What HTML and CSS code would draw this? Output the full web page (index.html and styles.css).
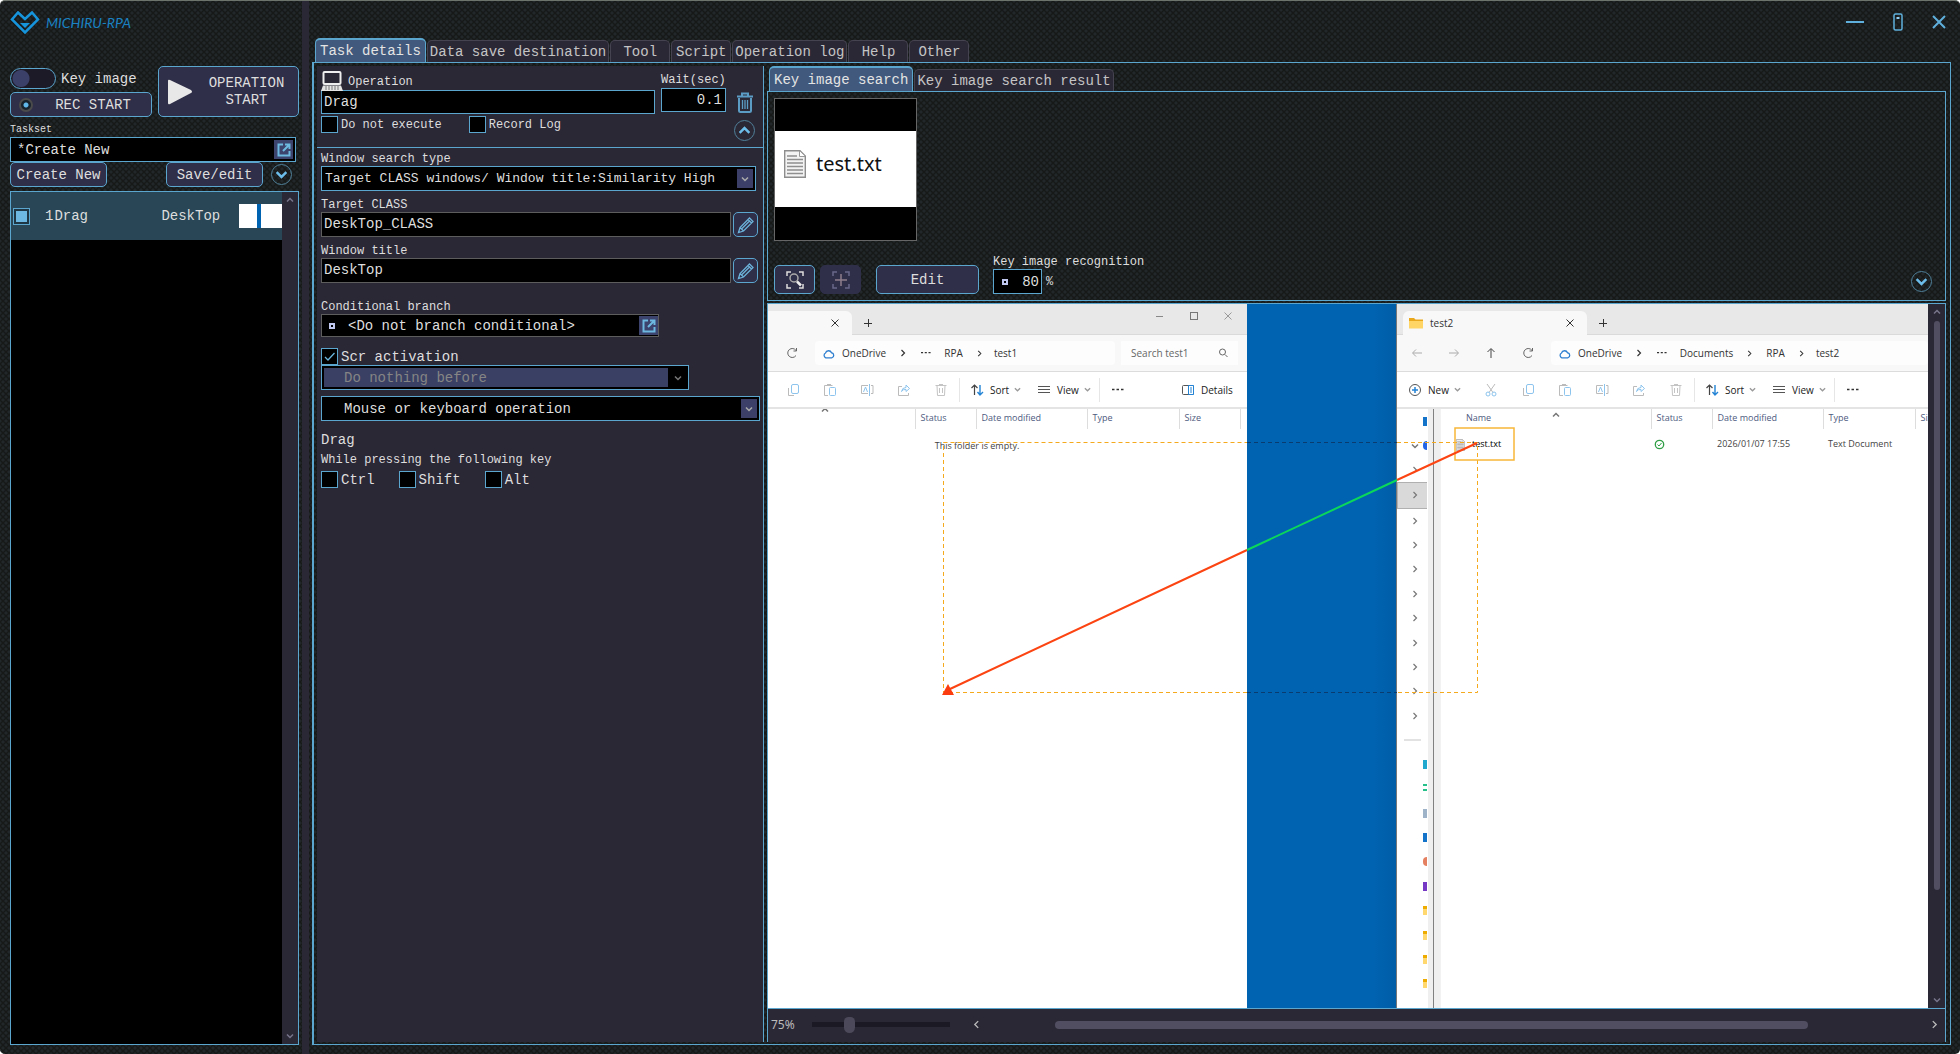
FILE: index.html
```html
<!DOCTYPE html>
<html lang="en">
<head>
<meta charset="utf-8">
<title>MICHIRU-RPA</title>
<link rel="stylesheet" href="styles.css">
</head>
<body>
<svg class="defs" aria-hidden="true">
  <symbol id="down" viewBox="0 0 8 8"><path d="M1 2.5 4 5.5 7 2.5" fill="none" stroke="currentColor" stroke-width="1.5"/></symbol>
  <symbol id="right" viewBox="0 0 8 8"><path d="M2.5 1 5.5 4 2.5 7" fill="none" stroke="currentColor" stroke-width="1.2"/></symbol>
  <symbol id="open" viewBox="0 0 14 14"><path d="M6 1.5H1.5v11h11V8M8 1.5h4.500V6M12.500 1.500 6 8" fill="none" stroke="currentColor" stroke-width="2"/></symbol>
  <symbol id="pencil" viewBox="0 0 18 18"><path d="M1.500 16.500 3 11.500 12.500 2 16 5.500 6.500 15ZM3 11.500 6.500 15M11 3.500 14.500 7M5 12.500 12.500 5" fill="none" stroke="currentColor" stroke-width="1.3"/></symbol>
  <symbol id="cross" viewBox="0 0 10 10"><path d="M1.500 1.500 8.500 8.500M8.500 1.500 1.500 8.500" fill="none" stroke="currentColor"/></symbol>
  <symbol id="plus" viewBox="0 0 10 10"><path d="M1 5.500H9M5.500 1V9" fill="none" stroke="currentColor"/></symbol>
  <symbol id="refresh" viewBox="0 0 12 12"><path d="M10 8.500A4.500 4.500 0 1 1 10 3.500M10.500 1V4H7.500" fill="none" stroke="#666"/></symbol>
  <symbol id="cloud" viewBox="0 0 12 12"><path d="M3.500 10A2.500 2.500 0 0 1 3.200 5.500 3 3 0 0 1 8.800 5.300 2.400 2.400 0 0 1 9 10Z" fill="none" stroke="#2f7fd0" stroke-width="1.200"/></symbol>
  <symbol id="dots" viewBox="0 0 12 4"><path d="M0 1.500h2.500M4.500 1.500h2.500M9 1.500h2.500" stroke="currentColor" stroke-width="1.500"/></symbol>
  <symbol id="cut" viewBox="0 0 14 14"><path d="M3 1 9 9.500M11 1 5 9.500" fill="none" stroke="#bbb"/><circle cx="4" cy="11" r="2" fill="none" stroke="#8cc4ee"/><circle cx="10" cy="11" r="2" fill="none" stroke="#8cc4ee"/></symbol>
  <symbol id="copy" viewBox="0 0 14 14"><path d="M2.500 5v7.500H8" fill="none" stroke="#bbb"/><rect x="5.500" y="1.500" width="7" height="9" rx="1.500" fill="none" stroke="#8cc4ee"/></symbol>
  <symbol id="paste" viewBox="0 0 14 14"><path d="M1.500 2.500h8M1.500 2.500v10H5M4 1.500h4" fill="none" stroke="#bbb"/><rect x="6.500" y="4.500" width="6" height="8" rx="1" fill="none" stroke="#8cc4ee"/></symbol>
  <symbol id="rename" viewBox="0 0 14 14"><path d="M8 2.500H1.500v8H8M11 2.500h2v8h-2" fill="none" stroke="#bbb"/><path d="M3.500 9 5.500 4 7.500 9M9.500 1v12" fill="none" stroke="#8cc4ee"/></symbol>
  <symbol id="share" viewBox="0 0 14 14"><path d="M5 3.500H1.500v9h10V10" fill="none" stroke="#bbb"/><path d="M4.500 8.500Q5 4.500 9 4.500V2L12.500 5.500 9 8.500V6.500Q6 6 4.500 8.500Z" fill="none" stroke="#8cc4ee"/></symbol>
  <symbol id="bin" viewBox="0 0 14 14"><path d="M1.500 2.500h11M3 2.500 3.500 12.500h7L11 2.500M5.500 5v5M8.500 5v5M5 1.500h4" fill="none" stroke="#c4c4c4"/></symbol>
  <symbol id="sort" viewBox="0 0 14 14"><path d="M4.500 12V2M1.500 5 4.500 2 7.500 5" fill="none" stroke="#444" stroke-width="1.200"/><path d="M10 2V12M7.500 9 10 12 13 9" fill="none" stroke="#2383d5" stroke-width="1.400"/></symbol>
  <symbol id="lines" viewBox="0 0 14 14"><path d="M1 3.500h12M1 6.500h12M1 9.500h12" stroke="#555"/></symbol>
  <symbol id="doc" viewBox="0 0 22 28"><path d="M.7.700H16L21.300 6V27.300H.7Z" fill="#f3f3f3" stroke="#8d8d8d" stroke-width="1.400"/><path d="M15.500 1V6.500H21" fill="#fff" stroke="#999"/><path d="M3 6h10M3 9.500h16M3 13h16M3 16.500h16M3 20h16M3 23.500h16" stroke="#8f8f8f" stroke-width="1.500"/></symbol>
</svg>
<div class="app">
  <aside class="side">
    <div class="brand">
      <svg width="30" height="24" viewBox="0 0 30 24"><path d="M8 1.500 15 8 22 1.500 28 8.500 15 21.500 2 8.500Z" fill="none" stroke="#1795dc" stroke-width="2.500"/><path d="M10 12h10l-5 5z" fill="#1795dc"/></svg>
      <span>MICHIRU-RPA</span>
    </div>
    <div class="runbar">
      <div class="rec">
        <label class="toggle"><input type="checkbox"><span>Key image</span></label>
        <button class="btn recbtn"><i class="led"></i><span>REC START</span></button>
      </div>
      <button class="btn start"><svg width="26" height="26" viewBox="0 0 26 26"><path d="M1 2Q1 0 3 1L24 11Q26 13 24 14L3 25Q1 26 1 24Z" fill="#e8e8e8"/></svg><span>OPERATION<br>START</span></button>
    </div>
    <label class="tiny" for="taskset">Taskset</label>
    <div class="field taskset"><input id="taskset" value="*Create New"><button class="sq" aria-label="Open taskset"><svg width="14" height="14"><use href="#open"/></svg></button></div>
    <div class="taskbtns"><button class="btn">Create New</button><button class="btn save">Save/edit</button><button class="round" aria-label="Expand"><svg width="13" height="13"><use href="#down"/></svg></button></div>
    <div class="list">
      <div class="tasks">
        <div class="task">
          <input type="checkbox" class="mark" checked aria-label="Run task 1">
          <span class="num">1</span><span class="name">Drag</span><span>DeskTop</span>
          <i class="thumb"></i>
        </div>
      </div>
      <div class="scroll"><svg class="up" width="8" height="8"><use href="#down"/></svg><svg width="8" height="8"><use href="#down"/></svg></div>
    </div>
  </aside>
  <div class="divider"></div>
  <main class="main">
    <header class="winbtns">
      <button aria-label="Minimize"><svg width="20" height="20" viewBox="0 0 20 20"><path d="M1 10h18" stroke="#5fb0dc" stroke-width="2"/></svg></button>
      <button aria-label="Restore"><svg width="10" height="20" viewBox="0 0 10 20"><rect x="1" y="2" width="8" height="16" rx="1.500" fill="none" stroke="#5fb0dc" stroke-width="1.500"/><path d="M3.500 6h3" stroke="#8fd0f4" stroke-width="2"/></svg></button>
      <button aria-label="Close"><svg width="16" height="16" viewBox="0 0 16 16"><path d="M2 2 14 14M14 2 2 14" stroke="#5fb0dc" stroke-width="2"/></svg></button>
    </header>
    <nav class="tabs">
      <button class="tab on">Task details</button><button class="tab">Data save destination</button><button class="tab">Tool</button><button class="tab">Script</button><button class="tab">Operation log</button><button class="tab">Help</button><button class="tab">Other</button>
    </nav>
    <div class="frame">
      <section class="details">
        <div class="head">
          <div class="op">
            <div class="oplabel"><svg width="22" height="21" viewBox="0 0 22 21"><rect x="2.500" y="1" width="17" height="12" rx="1" fill="none" stroke="#eee" stroke-width="2"/><path d="M2 14.500h18l2 5.500H0z" fill="#e4e4e4"/><path d="M4 16h14M4 18h14" stroke="#777" stroke-dasharray="2 1"/></svg><label class="small" for="op">Operation</label></div>
            <div class="field"><input id="op" value="Drag"></div>
            <div class="checks small"><label><input type="checkbox" class="box">Do not execute</label><label class="log"><input type="checkbox" class="box">Record Log</label></div>
          </div>
          <div class="wait"><label class="small" for="wait">Wait(sec)</label><div class="field"><input id="wait" value="0.1"></div></div>
          <div class="tools">
            <button class="bare" aria-label="Delete"><svg width="18" height="21" viewBox="0 0 18 21"><path d="M1 4.500h16M6 4V1.500h6V4M3 6V18.500Q3 20 4.500 20h9Q15 20 15 18.500V6" fill="none" stroke="#5a9cc4" stroke-width="2"/><path d="M6.500 8v9M9 8v9M11.500 8v9" stroke="#5a9cc4" stroke-width="1.300"/></svg></button>
            <button class="round up" aria-label="Collapse"><svg width="13" height="13"><use href="#down"/></svg></button>
          </div>
        </div>
        <div class="form">
          <div class="group"><label class="small" for="wst">Window search type</label>
            <div class="field drop wst"><select id="wst"><option>Target CLASS windows/ Window title:Similarity High</option></select><i class="arrow"><svg width="8" height="8"><use href="#down"/></svg></i></div></div>
          <div class="group"><label class="small" for="cls">Target CLASS</label>
            <div class="pair"><div class="field dim"><input id="cls" value="DeskTop_CLASS"></div><button class="btn pen" aria-label="Edit class"><svg width="18" height="18"><use href="#pencil"/></svg></button></div></div>
          <div class="group"><label class="small" for="ttl">Window title</label>
            <div class="pair"><div class="field dim"><input id="ttl" value="DeskTop"></div><button class="btn pen" aria-label="Edit title"><svg width="18" height="18"><use href="#pencil"/></svg></button></div></div>
          <div class="group branch"><label class="small" for="cond">Conditional branch</label>
            <div class="field dim cond"><i class="dot"></i><input id="cond" value="&lt;Do not branch conditional&gt;"><button class="sq" aria-label="Open branch"><svg width="14" height="14"><use href="#open"/></svg></button></div></div>
          <div class="group scr"><label class="check"><input type="checkbox" class="box" checked>Scr activation</label>
            <div class="field drop before"><select disabled aria-label="Before activation"><option>Do nothing before</option></select><i class="arrow"><svg width="8" height="8"><use href="#down"/></svg></i></div></div>
          <div class="field drop mouse"><select aria-label="Operation type"><option>Mouse or keyboard operation</option></select><i class="arrow"><svg width="8" height="8"><use href="#down"/></svg></i></div>
          <div class="keys"><p>Drag</p><p class="small">While pressing the following key</p>
            <div class="checks"><label><input type="checkbox" class="box">Ctrl</label><label><input type="checkbox" class="box">Shift</label><label><input type="checkbox" class="box">Alt</label></div></div>
        </div>
      </section>
      <section class="work">
        <nav class="tabs"><button class="tab on">Key image search</button><button class="tab">Key image search result</button></nav>
        <div class="search">
          <div class="preview"><div><svg width="22" height="28"><use href="#doc"/></svg><span>test.txt</span></div></div>
          <div class="actions">
            <button class="btn ico" aria-label="Find"><svg width="18" height="18" viewBox="0 0 18 18"><path d="M1 5V1h4M13 1h4v4M17 13v4h-4M5 17H1v-4" fill="none" stroke="#ddd" stroke-width="1.500"/><circle cx="8" cy="7" r="4" fill="none" stroke="#aaa" stroke-width="1.500"/><path d="M11 10.500 15 14.500" stroke="#eee" stroke-width="2.500"/></svg></button>
            <button class="btn ico off" disabled aria-label="Add"><svg width="18" height="18" viewBox="0 0 18 18"><path d="M1 5V1h4M13 1h4v4M17 13v4h-4M5 17H1v-4" fill="none" stroke="#68688a" stroke-width="1.500"/><path d="M3 9h12M9 3v12" stroke="#8d7f8c" stroke-width="1.500"/></svg></button>
            <button class="btn edit">Edit</button>
            <div class="recog"><label class="small" for="rec">Key image recognition</label><div class="pct"><div class="field"><i class="dot"></i><input id="rec" value="80"></div><span class="small">%</span></div></div>
            <button class="round" aria-label="Expand"><svg width="13" height="13"><use href="#down"/></svg></button>
          </div>
        </div>
        <div class="viewer">
          <div class="stage">
            <div class="canvas">
              <div class="win one">
                <div class="wtop"><div class="wtab"><svg width="10" height="10"><use href="#cross"/></svg></div><svg class="add" width="10" height="10"><use href="#plus"/></svg>
                  <div class="wctl"><svg width="10" height="10" viewBox="0 0 10 10"><path d="M1 5.500h7" stroke="#888"/></svg><svg width="10" height="10" viewBox="0 0 10 10"><rect x="1.500" y="1.500" width="7" height="7" fill="none" stroke="#777"/></svg><svg width="10" height="10"><use href="#cross"/></svg></div></div>
                <div class="wnav"><span class="cell wide"><svg width="12" height="12"><use href="#refresh"/></svg></span>
                  <div class="addr"><svg width="13" height="13"><use href="#cloud"/></svg><span class="first">OneDrive</span><svg width="8" height="8"><use href="#right"/></svg><svg width="10" height="4"><use href="#dots"/></svg><span>RPA</span><svg width="7" height="7"><use href="#right"/></svg><span>test1</span></div>
                  <div class="find"><span>Search test1</span><svg width="10" height="10" viewBox="0 0 10 10"><circle cx="4.500" cy="4" r="3" fill="none" stroke="#666"/><path d="M7 6.500 9.500 9" stroke="#666"/></svg></div></div>
                <div class="wcmd"><span class="cell"><svg width="14" height="14"><use href="#copy"/></svg></span><span class="cell"><svg width="14" height="14"><use href="#paste"/></svg></span><span class="cell"><svg width="14" height="14"><use href="#rename"/></svg></span><span class="cell"><svg width="14" height="14"><use href="#share"/></svg></span><span class="cell"><svg width="14" height="14"><use href="#bin"/></svg></span>
                  <span class="cmd sep"><svg width="14" height="14"><use href="#sort"/></svg>Sort<svg width="7" height="7"><use href="#down"/></svg></span><span class="cmd view"><svg width="14" height="14"><use href="#lines"/></svg>View<svg width="7" height="7"><use href="#down"/></svg></span><span class="cell sep"><svg width="12" height="4"><use href="#dots"/></svg></span>
                  <span class="cmd info"><svg width="14" height="14" viewBox="0 0 14 14"><rect x="1.500" y="2.500" width="11" height="9" rx="1" fill="none" stroke="#555"/><path d="M7.500 2.500h5v9h-5zM9 5h2M9 7h2M9 9h2" fill="none" stroke="#2383d5"/></svg>Details</span></div>
                <table class="files"><colgroup><col class="c0"><col class="c1"><col class="c2"><col class="c3"><col class="c1"><col></colgroup>
                  <thead><tr><th><svg class="asc" width="8" height="8"><use href="#down"/></svg></th><th>Status</th><th>Date modified</th><th>Type</th><th>Size</th><th></th></tr></thead>
                  <tbody><tr><td colspan="6" class="empty">This folder is empty.</td></tr></tbody></table>
              </div>
              <div class="desk"></div>
              <div class="win two">
                <div class="wtop"><div class="wtab"><svg width="14" height="12" viewBox="0 0 14 12"><path d="M0 1h5l1.500 1.500H14V11H0z" fill="#eaa81c"/><path d="M0 4h14v7.500H0z" fill="#ffd566"/></svg><span>test2</span><svg width="10" height="10"><use href="#cross"/></svg></div><svg class="add" width="10" height="10"><use href="#plus"/></svg></div>
                <div class="wnav"><span class="cell"><svg width="12" height="12" viewBox="0 0 12 12"><path d="M11 6H2M5 2.500 1.500 6 5 9.500" fill="none" stroke="#aaa"/></svg></span><span class="cell"><svg width="12" height="12" viewBox="0 0 12 12"><path d="M1 6h9M7 2.500 10.500 6 7 9.500" fill="none" stroke="#aaa"/></svg></span><span class="cell"><svg width="12" height="12" viewBox="0 0 12 12"><path d="M6 11V2M2.500 5 6 1.500 9.500 5" fill="none" stroke="#444"/></svg></span><span class="cell"><svg width="12" height="12"><use href="#refresh"/></svg></span>
                  <div class="addr"><svg width="13" height="13"><use href="#cloud"/></svg><span class="first">OneDrive</span><svg width="8" height="8"><use href="#right"/></svg><svg width="10" height="4"><use href="#dots"/></svg><span>Documents</span><svg width="7" height="7"><use href="#right"/></svg><span>RPA</span><svg width="7" height="7"><use href="#right"/></svg><span>test2</span></div></div>
                <div class="wcmd"><span class="cmd new"><svg width="14" height="14" viewBox="0 0 14 14"><circle cx="7" cy="7" r="5.500" fill="none" stroke="#555"/><path d="M4 7h6M7 4v6" stroke="#2383d5" stroke-width="1.500"/></svg>New<svg width="7" height="7"><use href="#down"/></svg></span><span class="cell"><svg width="14" height="14"><use href="#cut"/></svg></span><span class="cell"><svg width="14" height="14"><use href="#copy"/></svg></span><span class="cell"><svg width="14" height="14"><use href="#paste"/></svg></span><span class="cell"><svg width="14" height="14"><use href="#rename"/></svg></span><span class="cell"><svg width="14" height="14"><use href="#share"/></svg></span><span class="cell"><svg width="14" height="14"><use href="#bin"/></svg></span>
                  <span class="cmd sep"><svg width="14" height="14"><use href="#sort"/></svg>Sort<svg width="7" height="7"><use href="#down"/></svg></span><span class="cmd view"><svg width="14" height="14"><use href="#lines"/></svg>View<svg width="7" height="7"><use href="#down"/></svg></span><span class="cell sep"><svg width="12" height="4"><use href="#dots"/></svg></span></div>
                <div class="wbody">
                  <div class="tree">
                    <div class="nodes">
                      <div class="node"><i class="c-sky"></i></div><div class="node"><svg width="8" height="8"><use href="#down"/></svg><i class="c-blue"></i></div>
                      <div class="node"><svg width="8" height="8"><use href="#right"/></svg></div><div class="node sel"><svg width="8" height="8"><use href="#right"/></svg></div><div class="node"><svg width="8" height="8"><use href="#right"/></svg></div><div class="node"><svg width="8" height="8"><use href="#right"/></svg></div><div class="node"><svg width="8" height="8"><use href="#right"/></svg></div><div class="node"><svg width="8" height="8"><use href="#right"/></svg></div><div class="node"><svg width="8" height="8"><use href="#right"/></svg></div><div class="node"><svg width="8" height="8"><use href="#right"/></svg></div><div class="node"><svg width="8" height="8"><use href="#right"/></svg></div><div class="node"><svg width="8" height="8"><use href="#right"/></svg></div><div class="node"><svg width="8" height="8"><use href="#right"/></svg></div>
                      <div class="node"><hr></div>
                      <div class="node"><i class="c-teal"></i></div><div class="node"><i class="c-green"></i></div><div class="node"><i class="c-grey"></i></div><div class="node"><i class="c-sky"></i></div><div class="node"><i class="c-coral"></i></div><div class="node"><i class="c-violet"></i></div><div class="node"><i class="c-gold"></i></div><div class="node"><i class="c-gold"></i></div><div class="node"><i class="c-gold"></i></div><div class="node"><i class="c-gold"></i></div>
                    </div>
                    <div class="bar"></div>
                  </div>
                  <table class="files"><colgroup><col class="n0"><col class="c1"><col class="c2"><col class="c3"><col></colgroup>
                    <thead><tr><th class="nm">Name<svg class="asc" width="8" height="8"><use href="#down"/></svg></th><th>Status</th><th>Date modified</th><th>Type</th><th>Size</th></tr></thead>
                    <tbody><tr><td class="nm file"><svg width="9" height="12"><use href="#doc"/></svg>test.txt</td><td class="ok"><svg width="11" height="11" viewBox="0 0 11 11"><circle cx="5.500" cy="5.500" r="4.200" fill="none" stroke="#2f9e44" stroke-width="1.300"/><path d="M3.500 5.500 5 7 7.500 4" fill="none" stroke="#2f9e44"/></svg></td><td>2026/01/07 17:55</td><td>Text Document</td><td></td></tr></tbody></table>
                </div>
              </div>
              <svg class="overlay" width="1161" height="703">
                <g fill="none" stroke="#f5a91d" stroke-dasharray="4 3"><path d="M175.500 138.500H479M629 138.500H709.500V388.500H629M479 388.500H175.500V138.500"/><path d="M479 138.500H629M479 388.500H629" stroke="#0b3c70"/></g>
                <rect x="687" y="124" width="59" height="32" fill="none" stroke="#f8b838" stroke-width="1.500"/>
                <path d="M709 139 629 176M479 246 182 385" stroke="#fb4412" stroke-width="2"/><path d="M629 176 479 246" stroke="#0bd85a" stroke-width="2"/>
                <path d="M174 391 180 380 186 391Z" fill="#fb3c10"/>
              </svg>
            </div>
            <div class="scroll vs"><svg class="up" width="8" height="8"><use href="#down"/></svg><i></i><svg width="8" height="8"><use href="#down"/></svg></div>
          </div>
          <div class="foot"><label for="zoom">75%</label><input id="zoom" type="range" min="0" max="100" value="25"><svg class="left" width="9" height="9"><use href="#right"/></svg><div class="hs"><i></i></div><svg width="9" height="9"><use href="#right"/></svg></div>
        </div>
      </section>
    </div>
  </main>
</div>
</body>
</html>
```
FILE: styles.css
```css
:root {
  --blue: #5aa6cf;
  --panel: #2b2836;
  --btn: #302f49;
  --text: #dedede;
  --dots: radial-gradient(circle at 50% 50%, #22282a 0, #22282a 1px, transparent 2px);
}
* { box-sizing: border-box; }
body {
  margin: 0;
  color: var(--text);
  font: 14px/16px "Liberation Mono", monospace;
  background: #fff;
}
button, input, select { font: inherit; color: inherit; margin: 0; padding: 0; border: 0; background: none; min-width: 0; }
button { display: flex; align-items: center; justify-content: center; white-space: nowrap; }
svg { display: block; flex: none; }
p { margin: 0; }
i { display: block; flex: none; }
.defs { position: absolute; width: 0; height: 0; }
.app {
  display: grid;
  grid-template-columns: 302px 7px 1fr;
  height: 100vh;
  border-top: 1px solid #6c746c;
  border-radius: 5px;
  background: var(--dots) 0 0 / 6px 6px, var(--dots) 3px 3px / 6px 6px, #171919;
  overflow: hidden;
}
.divider { background: var(--panel); }
.small { font-size: 12px; }
.tiny { font-size: 10px; line-height: 12px; }

/* shared controls */
.btn { background: var(--btn); border: 1px solid var(--blue); border-radius: 5px; }
.round { width: 21px; height: 21px; border: 1px solid #4f8099; border-radius: 50%; color: #6dbdea; }
.round.up svg, svg.up { transform: rotate(180deg); }
.field { display: flex; align-items: center; background: #000; border: 1px solid var(--blue); height: 25px; }
.field.dim { border-color: #5d5d5d; }
.field input { flex: 1; width: 100%; padding-left: 2px; }
.sq { width: 19px; height: 19px; background: #3c436c; color: #6cb8e0; flex: none; }
.dot { width: 6px; height: 6px; border: 2px solid #c0c8f0; }
.drop select { flex: 1; appearance: none; height: 100%; padding-left: 3px; opacity: 1; }
.arrow { display: flex; align-items: center; justify-content: center; align-self: stretch; width: 16px; margin: 2px; background: #3c4068; color: #aaa; }
.box { appearance: none; width: 17px; height: 17px; border: 1px solid var(--blue); background: #000; margin-right: 3px; flex: none; }
.box:checked { background: #000 url("data:image/svg+xml,%3Csvg xmlns='http://www.w3.org/2000/svg' viewBox='0 0 15 15'%3E%3Cpath d='M3 8 6 11 12.500 4' fill='none' stroke='%236ab5dc' stroke-width='1.300'/%3E%3C/svg%3E"); }
.scroll { display: flex; flex-direction: column; justify-content: space-between; align-items: center; width: 16px; padding: 4px 0; background: var(--panel); color: #77758a; }

/* left side */
.side { display: flex; flex-direction: column; padding: 10px 3px 9px 10px; min-height: 0; }
.brand { display: flex; align-items: center; gap: 6px; height: 24px; color: #1a82c2; font: italic 14px/16px Lato, sans-serif; }
.runbar { display: flex; gap: 6px; margin-top: 31px; height: 51px; }
.rec { display: flex; flex-direction: column; justify-content: space-between; width: 142px; }
.toggle { display: flex; align-items: center; gap: 5px; margin-top: 2px; white-space: nowrap; }
.toggle input { appearance: none; width: 46px; height: 21px; border: 1px solid var(--blue); border-radius: 11px; background: radial-gradient(circle at 10px 50%, #3b4068 8px, #1c1a26 9px); }
.recbtn { height: 25px; gap: 22px; padding-right: 12px; }
.led { width: 14px; height: 14px; border-radius: 50%; border: 2px solid #4b4b4b; background: radial-gradient(#5fb7ea 2px, #16222c 3px); }
.start { width: 141px; gap: 16px; line-height: 17px; padding-right: 6px; }
.side .tiny { margin: 7px 0 1px; line-height: 12px; }
.taskset { width: 286px; padding-right: 2px; }
.taskset input { padding-left: 6px; }
.taskbtns { display: flex; align-items: center; gap: 8px; }
.taskbtns .btn { width: 97px; height: 25px; }
.taskbtns .save { margin-left: 51px; }
.list { display: flex; flex: 1; margin-top: 4px; border: 1px solid var(--blue); background: #000; min-height: 0; }
.tasks { flex: 1; }
.task { display: flex; align-items: center; height: 48px; padding-left: 2px; background: #284656; }
.mark { appearance: none; width: 17px; height: 17px; border: 1px solid var(--blue); background: #6cb8e2; box-shadow: inset 0 0 0 2px #1f3744; }
.num { margin: 0 1px 0 15px; }
.name { width: 107px; }
.thumb { width: 43px; height: 24px; margin-left: auto; background: linear-gradient(90deg, #fff 18px, #0063b1 18px 22px, #fff 22px); }

/* main area */
.main { display: flex; flex-direction: column; padding: 0 9px 9px 3px; min-width: 0; min-height: 0; }
.winbtns { display: flex; justify-content: flex-end; align-items: center; gap: 28px; height: 37px; padding: 4px 4px 0 0; }
.tabs { display: flex; align-items: flex-end; gap: 1px; height: 24px; padding-left: 3px; flex: none; }
.tab { min-width: 60px; height: 22px; padding: 0 2px; background: var(--panel); border: 1px solid #45434f; border-bottom: 0; border-radius: 5px 5px 0 0; color: #c4c4c4; }
.tab.on { height: 24px; padding: 0 4px; background: #41597c; border: 1px solid var(--blue); border-width: 2px 1px 0; color: #e4e4e4; }
.frame { display: flex; flex: 1; border: 1px solid var(--blue); border-left-width: 2px; padding: 3px 4px 2px 3px; min-height: 0; }
.details { width: 447px; flex: none; background: var(--panel); border-right: 1px solid var(--blue); }
.head { display: flex; height: 82px; padding: 3px 8px 0 4px; border-bottom: 1px solid var(--blue); }
.op { width: 334px; }
.oplabel { display: flex; align-items: center; gap: 5px; height: 21px; padding-top: 4px; }
.op .field, .wait .field { height: 24px; }
.checks { display: flex; margin-top: 2px; }
.checks label, .check { display: flex; align-items: center; }
.log { margin-left: 27px; }
.wait { display: flex; flex-direction: column; width: 65px; margin-left: 6px; padding-top: 3px; }
.wait input { text-align: right; padding-right: 3px; }
.tools { display: flex; flex-direction: column; align-items: center; gap: 7px; margin-left: auto; padding: 23px 0 0; }
.form { padding: 2px 0 0 4px; }
.group { margin-bottom: 5px; }
.group > .small { display: block; height: 16px; line-height: 18px; }
.wst { width: 435px; }
.wst select { font-size: 13px; }
.pair { display: flex; gap: 2px; }
.pair .field { width: 410px; }
.pair input { padding: 0 0 2px 2px; }
.pen { width: 25px; height: 25px; color: #6cb2da; }
.branch { margin: 15px 0 11px; }
.cond { width: 338px; height: 23px; padding-left: 7px; }
.cond input { padding-left: 13px; }
.scr .before { width: 368px; }
.before select { color: #858585; background: #3a4064; margin: 2px 0 2px 2px; height: 19px; padding-left: 20px; }
.before .arrow { background: #000; color: #777; }
.group.scr { margin-bottom: 6px; }
.mouse { width: 439px; }
.mouse select { padding-left: 22px; }
.keys { margin-top: 11px; }
.keys p + p { margin-top: 4px; }
.keys .checks { margin-top: 3px; gap: 24px; }

/* key image search */
.work { display: flex; flex-direction: column; flex: 1; margin-left: 3px; min-width: 0; }
.work .tabs { height: 25px; padding-left: 2px; }
.work .tab.on { height: 25px; }
.search { display: flex; flex-direction: column; justify-content: space-between; height: 210px; flex: none; padding: 6px; border: 1px solid var(--blue); }
.preview { display: flex; align-items: center; width: 143px; height: 143px; background: #000; border: 1px solid #666; }
.preview div { display: flex; align-items: center; gap: 10px; width: 141px; height: 76px; padding: 0 0 9px 9px; margin-bottom: 2px; background: #fff; color: #111; font: 20px/24px "Noto Sans", sans-serif; }
.actions { display: flex; align-items: flex-end; }
.ico { width: 41px; height: 29px; margin-right: 5px; }
.off { border-color: var(--btn); }
.edit { width: 103px; height: 29px; margin: 0 14px 0 10px; }
.recog .small { line-height: 14px; }
.recog .field { width: 49px; padding-left: 8px; }
.recog input { text-align: right; padding-right: 2px; }
.pct { display: flex; align-items: center; gap: 4px; }
.actions .round { margin: 0 7px 2px auto; }

/* screen capture viewer */
.viewer { display: flex; flex-direction: column; flex: 1; margin-top: 2px; border: 1px solid var(--blue); border-bottom: 0; min-height: 0; background: var(--panel); }
.stage { display: flex; flex: 1; border-bottom: 1px solid var(--blue); min-height: 0; }
.canvas { position: relative; display: flex; flex: 1; overflow: hidden; background: #fff; color: #333; font: 10px/14px "Open Sans", sans-serif; }
.overlay { position: absolute; left: 0; top: 0; }
.vs { width: 17px; gap: 5px; }
.vs i { flex: 1; width: 6px; border-radius: 3px; background: #504e60; margin-bottom: 101px; }
.foot { display: flex; align-items: center; height: 33px; padding: 0 6px 2px 3px; font: 12px/16px "Noto Sans", sans-serif; color: #bbb; }
.foot label { width: 25px; }
.foot input { appearance: none; width: 138px; height: 5px; margin-left: 16px; background: #1b1923; }
.foot input::-webkit-slider-thumb { appearance: none; width: 11px; height: 16px; background: #4c4a5a; border-radius: 5px 5px 6px 6px; }
.left { transform: rotate(180deg); margin: 0 74px 0 22px; }
.hs { flex: 1; }
.hs i { width: 753px; height: 8px; border-radius: 4px; background: #504e60; }
.win { display: flex; flex-direction: column; min-width: 0; overflow: hidden; white-space: nowrap; background: #fff; }
.one { width: 479px; flex: none; }
.two { flex: 1; border-left: 1px solid #777; }
.desk { width: 149px; flex: none; background: linear-gradient(90deg, #0063b1 85%, #005da6); }
.wtop { display: flex; align-items: flex-end; height: 31px; background: #e8e8e8; border-bottom: 1px solid #dadada; }
.wtab { display: flex; align-items: center; width: 84px; height: 24px; background: #f8f8f8; border-radius: 0 6px 0 0; padding: 0 12px 1px 0; margin-bottom: -1px; }
.wtab svg:last-child { margin-left: auto; }
.two .wtab { width: 184px; margin-left: 6px; border-radius: 6px 6px 0 0; padding-left: 6px; gap: 7px; }
.add { margin: 0 0 6px 11px; }
.wctl { display: flex; align-self: flex-start; gap: 24px; margin: 7px 14px 0 auto; color: #999; }
.wnav { display: flex; align-items: center; height: 37px; background: #f8f8f8; border-bottom: 1px solid #dcdcdc; }
.cell { display: flex; align-items: center; justify-content: center; width: 37px; height: 24px; }
.wide { width: 47px; }
.addr { display: grid; grid-template-columns: 27px 47px 28px 18px 37px 15px 37px; align-items: center; justify-items: center; width: 300px; height: 24px; background: #fdfdfd; border-radius: 4px; flex: none; }
.addr .first { justify-self: start; }
.two .wnav { padding-left: 1px; }
.two .addr { grid-template-columns: 27px 47px 28px 18px 71px 15px 37px 15px 37px; width: auto; flex: 1; margin-left: 5px; }
.find { display: flex; align-items: center; justify-content: space-between; width: 117px; height: 24px; margin-left: 6px; padding: 0 10px; background: #fdfdfd; color: #666; }
.wcmd { display: flex; align-items: center; height: 37px; border-bottom: 2px solid #e4e4e4; }
.one .wcmd { padding-left: 6px; }
.cmd { display: flex; align-items: center; gap: 6px; width: 68px; height: 24px; padding-left: 10px; color: #222; }
.cmd svg:last-child:not(:first-child) { margin-left: -1px; color: #999; }
.view { width: 72px; }
.new { width: 75px; padding-left: 11px; }
.info { margin-left: auto; width: 66px; padding-left: 0; }
.sep { border-left: 1px solid #e6e6e6; }
.files { border-collapse: collapse; table-layout: fixed; width: 100%; align-self: flex-start; color: #444; font-size: 9px; }
.files th { height: 20px; padding: 0 0 2px 5px; text-align: left; font-weight: 400; color: #4d5a80; border-left: 1px solid #ddd; overflow: hidden; }
.files th:first-child { border-left: 0; }
.files td { height: 30px; padding: 0 0 0 5px; }
.c0 { width: 147px; } .c1 { width: 61px; } .c2 { width: 111px; } .c3 { width: 92px; } .n0 { width: 210px; }
.asc { transform: rotate(180deg); color: #777; margin: -12px 0 0 48px; }
.files td.empty { padding: 4px 61px 0 0; text-align: center; }
.files .nm { padding-left: 25px; }
.nm .asc { margin: -14px 0 6px 86px; }
.files .file { padding-left: 15px; color: #000; }
.file svg { display: inline-block; vertical-align: middle; margin-right: 7px; }
.files td.ok { padding-left: 3px; }
.wbody { display: flex; flex: 1; min-height: 0; }
.tree { display: flex; width: 44px; flex: none; border-right: 1px solid #f2f2f2; }
.nodes { display: flex; flex-direction: column; width: 30px; height: 587px; }
.bar { width: 12px; margin-left: 1px; background: linear-gradient(90deg, #efefef 5px, #808080 5px 6px, #efefef 6px); }
.node { display: flex; flex: 1; align-items: center; color: #777; }
.node svg { margin-left: 14px; }
.node.sel { background: #d9d9d9; border: 1px solid #b0b0b0; border-right: 0; }
.node.sel svg { margin-left: 13px; }
.node i { width: 4px; height: 9px; margin-left: auto; }
.node hr { width: 17px; margin: 0 0 0 7px; border: 0; border-top: 2px solid #e2e2e2; }
.c-sky { background: #1273c8; }
.c-blue { background: #2264e5; border-radius: 4px 0 0 4px; }
.c-teal { background: #21a8cf; }
.c-green { background: linear-gradient(#28c08a 2px, #fff 2px 5px, #28c08a 5px 7px, #fff 7px); }
.c-grey { background: #9fb3c8; }
.c-coral { background: #e4805f; border-radius: 4px 0 0 4px; }
.c-violet { background: #7438c4; }
.c-gold { background: linear-gradient(#efac00 3px, #ffd970 3px); }
```
